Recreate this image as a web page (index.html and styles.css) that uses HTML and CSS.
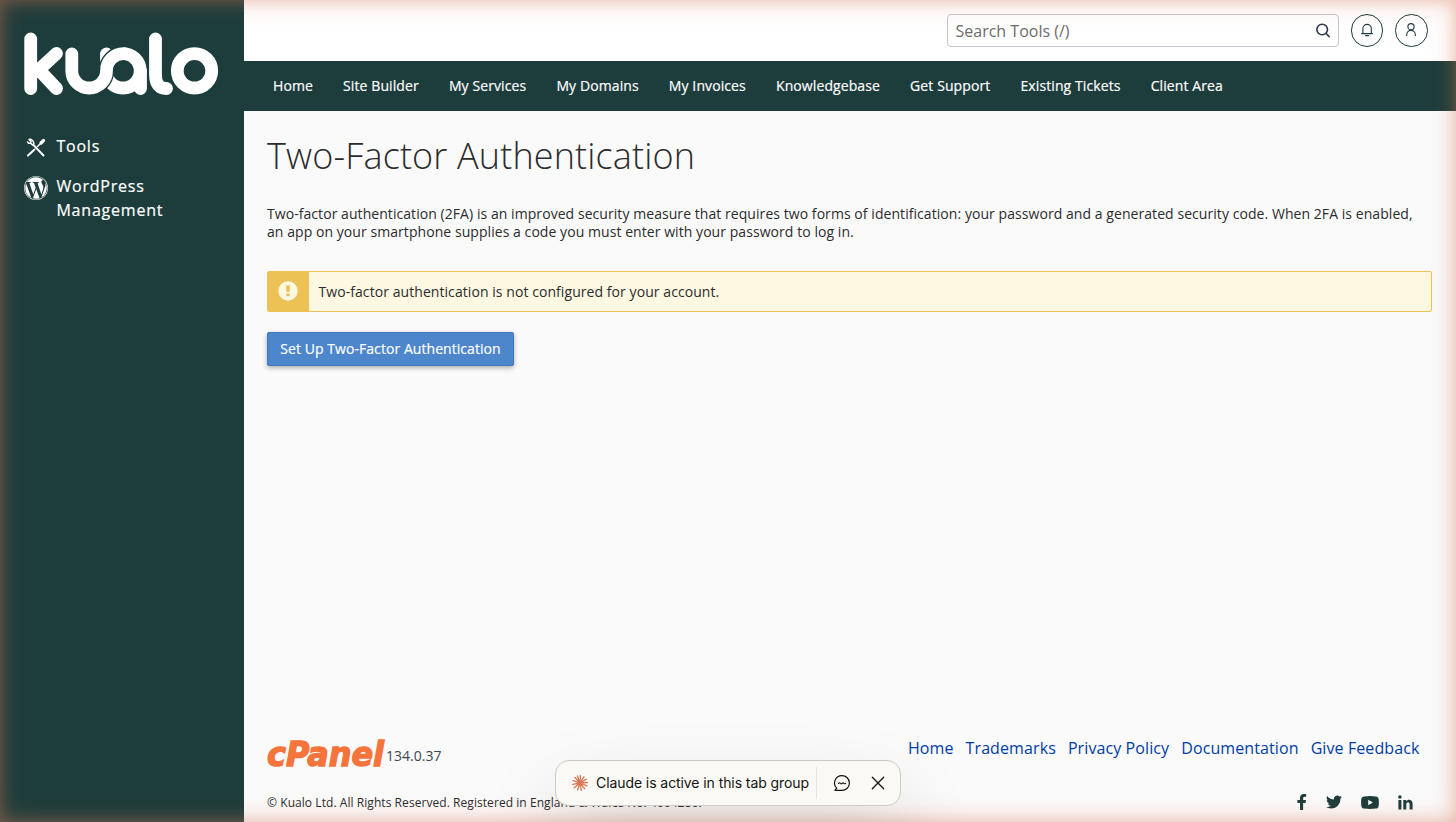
FILE: index.html
```html
<!DOCTYPE html>
<html lang="en">
<head>
<meta charset="utf-8">
<title>Two-Factor Authentication</title>
<link rel="stylesheet" href="styles.css">
</head>
<body>
<div class="app">
  <aside class="sidebar">
    <svg class="brand" width="196" height="66" viewBox="23 31 196 66" role="img" aria-label="kualo">
      <g class="brand-strokes">
        <path d="M30.700 39v49.500M56.500 53.500 37 71.500M41 72l15.500 16.500M155.500 39v35.500q0 14 11 14M140.500 71v17.500"/>
        <circle cx="123" cy="70.800" r="17.200"/>
        <circle cx="194.500" cy="70.800" r="17.200"/>
        <path d="M106.500 54v6"/>
        <path class="brand-gap" d="M101 83.500A17.500 17.500 0 0 0 106.500 71A17 17 0 0 1 124 53.600"/>
        <path d="M71.800 54V71a17.350 17 0 0 0 34.700 0A17 17 0 0 1 124 53.600"/>
      </g>
    </svg>
    <nav class="side-nav">
      <a class="side-link">
        <svg class="side-icon" viewBox="0 0 24 24"><g fill="none" stroke="currentColor" stroke-linecap="round"><path d="M9.500 9 19.500 19.500" stroke-width="1.900"/><path d="M4 19.500 10.500 13.500" stroke-width="2"/><path d="M13.500 10.500 18 6" stroke-width="1.400"/><path d="M17 7 19.500 4.500" stroke-width="3.200"/><path d="M5 3.500 7 5.500 6.500 7 4.700 7.300 3.500 6M6.500 7Q9 10 9.500 8.500 10.500 6 8 4 7 3 5.500 3.300" stroke-width="1.500"/></g></svg>
        <span>Tools</span>
      </a>
      <a class="side-link">
        <svg class="side-icon" viewBox="0 0 24 24" fill="currentColor"><path d="M21.469 6.825c.84 1.537 1.318 3.300 1.318 5.175 0 3.979-2.156 7.456-5.363 9.325l3.295-9.527c.615-1.540.820-2.771.820-3.864 0-.405-.026-.780-.070-1.110m-7.981.105c.647-.030 1.232-.105 1.232-.105.582-.075.514-.930-.067-.899 0 0-1.755.135-2.880.135-1.064 0-2.850-.150-2.850-.150-.585-.030-.661.855-.075.885 0 0 .540.061 1.125.090l1.680 4.605-2.370 7.080L5.354 6.900c.649-.030 1.234-.100 1.234-.100.585-.075.516-.930-.065-.896 0 0-1.746.138-2.874.138-.200 0-.438-.008-.690-.015C4.911 3.150 8.235 1.215 12 1.215c2.809 0 5.365 1.072 7.286 2.833-.046-.003-.091-.009-.141-.009-1.060 0-1.812.923-1.812 1.914 0 .890.513 1.643 1.060 2.531.411.720.890 1.643.890 2.977 0 .915-.354 1.994-.821 3.479l-1.075 3.585zM12 22.784c-1.059 0-2.081-.153-3.048-.437l3.237-9.406 3.315 9.087c.024.053.050.101.078.149-1.120.393-2.325.609-3.582.609M1.211 12c0-1.564.336-3.050.935-4.390L7.290 21.709A10.786 10.786 0 0 1 1.211 12M12 0a12 12 0 1 0 0 24 12 12 0 0 0 0-24m0 23.400a11.400 11.400 0 1 1 0-22.800 11.400 11.400 0 0 1 0 22.800"/></svg>
        <span>WordPress Management</span>
      </a>
    </nav>
  </aside>
  <div class="page">
    <header class="topbar">
      <div class="search">
        <span>Search Tools (/)</span>
        <svg width="16" height="16" viewBox="0 0 16 16" fill="none" stroke="#293a4a" stroke-width="1.600" stroke-linecap="round"><circle cx="7.200" cy="6.500" r="5.300"/><path d="m11.200 10.500 3 3.200"/></svg>
      </div>
      <a class="round-button" aria-label="Notifications"><svg width="16" height="16" viewBox="0 0 16 16" fill="none" stroke="currentColor" stroke-width="1.100"><path d="M2.200 11.600h11.600M3.900 11.600V6.600a4.200 4.200 0 0 1 8.400 0v5M6.200 13.600h3.700"/></svg></a>
      <a class="round-button" aria-label="Account"><svg width="16" height="16" viewBox="0 0 16 16" fill="none" stroke="currentColor" stroke-width="1.100"><circle cx="8" cy="4.700" r="3.100"/><path d="M3.700 13.900v-1.200a4.300 4.300 0 0 1 8.600 0v1.200"/></svg></a>
    </header>
    <nav class="navbar"><a>Home</a><a>Site Builder</a><a>My Services</a><a>My Domains</a><a>My Invoices</a><a>Knowledgebase</a><a>Get Support</a><a>Existing Tickets</a><a>Client Area</a></nav>
    <main class="content">
      <h1>Two-Factor Authentication</h1>
      <p class="intro">Two-factor authentication (2FA) is an improved security measure that requires two forms of identification: your password and a generated security code. When 2FA is enabled, an app on your smartphone supplies a code you must enter with your password to log in.</p>
      <div class="alert">
        <div class="alert-icon"><svg width="20" height="20" viewBox="0 0 20 20"><circle cx="10" cy="10" r="9.700" fill="#fdf8e1"/><path d="M8 4.500h4l-.4 6.500H8.400zM8.300 12.500h3.400v2.700H8.300z" fill="#ecc255"/></svg></div>
        <div class="alert-text">Two-factor authentication is not configured for your account.</div>
      </div>
      <button class="primary">Set Up Two-Factor Authentication</button>
    </main>
    <footer class="footer">
      <div class="footer-row">
        <div class="version">
          <svg class="cpanel-logo" width="119" height="32" viewBox="0 0 119 32" role="img" aria-label="cPanel"><text class="cpanel" x="0" y="26" textLength="117" lengthAdjust="spacingAndGlyphs">cPanel</text></svg>
          <span>134.0.37</span>
        </div>
        <nav class="footer-links"><a>Home</a><a>Trademarks</a><a>Privacy Policy</a><a>Documentation</a><a>Give Feedback</a></nav>
      </div>
      <div class="footer-row legal">
        <span>© Kualo Ltd. All Rights Reserved. Registered in England &amp; Wales No. 4664286.</span>
        <div class="social">
          <svg width="10" height="16" viewBox="0 0 10 16"><path d="M3 16V9H.4V6H3V4C3 1.400 4.500 0 6.900 0 8 0 9.200.200 9.200.200v2.600H7.900C6.600 2.800 6.100 3.600 6.100 4.400V6H9l-.5 3H6.100v7z"/></svg>
          <svg width="16" height="16" viewBox="0 0 24 24"><path d="M23.950 4.570a10 10 0 0 1-2.820.770 4.960 4.960 0 0 0 2.160-2.720c-.950.550-2 .950-3.120 1.180a4.920 4.920 0 0 0-8.380 4.480A13.930 13.930 0 0 1 1.640 3.160a4.820 4.820 0 0 0-.660 2.480c0 1.710.870 3.210 2.190 4.100a4.900 4.900 0 0 1-2.230-.620v.060a4.920 4.920 0 0 0 3.950 4.830 5 5 0 0 1-2.210.080 4.940 4.940 0 0 0 4.600 3.420A9.870 9.870 0 0 1 0 19.540a13.990 13.990 0 0 0 7.550 2.210c9.050 0 14-7.500 14-13.990 0-.210 0-.420-.020-.630a9.900 9.900 0 0 0 2.420-2.560z"/></svg>
          <svg width="18" height="13" viewBox="0 0 18 13"><path fill-rule="evenodd" d="M3 .400Q9-.300 15 .400C17.200.700 17.800 1.600 17.900 6.500 17.800 11.400 17.200 12.300 15 12.600Q9 13.300 3 12.600C.8 12.300.2 11.400.1 6.500.2 1.600.8.700 3 .400zM7.200 3.800v5.400l4.700-2.700z"/></svg>
          <svg width="15" height="15" viewBox="0 0 15 15"><path d="M.4 4.900h3V14.500h-3zM5.300 4.900h2.900v1.300C9.700 3.700 14.600 4 14.600 8.700v5.800h-3V9.300c0-3-3.300-2.700-3.300 0v5.200h-3z"/><circle cx="1.900" cy="2" r="1.800"/></svg>
        </div>
      </div>
    </footer>
  </div>
</div>
<div class="glow"></div>
<div class="status-pill">
  <svg class="burst" width="16" height="16" viewBox="-8 -8 16 16" stroke="#d97757" stroke-width="1.300" stroke-linecap="round"><path d="M0 0 .4-7.400M0 0 4-6.300M0 0 6.400-3.900M0 0 7.500-.5M0 0 7 2.800M0 0 4.800 5.900M0 0 1.300 7.300M0 0-2.400 7M0 0-5.800 4.800M0 0-7.400 1.300M0 0-7-2.300M0 0-5-5.500M0 0-2.600-7"/></svg>
  <span class="status-text">Claude is active in this tab group</span>
  <span class="divider"></span>
  <svg class="chat" width="18" height="18" viewBox="0 0 18 18" fill="none" stroke="#141413" stroke-width="1.200" stroke-linecap="round" stroke-linejoin="round"><path d="M9 1.600a7.400 7.400 0 1 1 0 14.800H2l1.700-2.200A7.400 7.400 0 0 1 9 1.600zM5.500 9.400q1-1.300 2 0 .9.900 1.700 0 .9-1 1.700 0 .8.700 1.600 0"/></svg>
  <svg class="close" width="14" height="14" viewBox="0 0 14 14" stroke="#141413" stroke-width="1.300" stroke-linecap="round"><path d="m1.300 1.300 11.400 11.400M12.700 1.300 1.300 12.700"/></svg>
</div>
</body>
</html>
```

FILE: styles.css
```css
* { box-sizing: border-box; }
body { margin: 0; font-family: "Open Sans", sans-serif; font-size: 14px; color: #2c2c2c; overflow: hidden; }
svg { display: block; flex: none; }
.app { display: flex; height: 822px; background: #fafafa; }
.sidebar { width: 244px; flex: none; background: #1d3d3c; padding: 31px 23px; color: #fff; }
.brand-strokes { fill: none; stroke: #fff; stroke-width: 12.8; stroke-linecap: round; stroke-linejoin: round; }
.brand-strokes .brand-gap { stroke: #1d3d3c; stroke-width: 15.5; stroke-linecap: butt; }
.side-nav { display: flex; flex-direction: column; gap: 16px; margin-top: 37px; }
.side-link { display: flex; align-items: flex-start; gap: 8.4px; padding-left: 1px; font-size: 16px; line-height: 24px; letter-spacing: .8px; -webkit-text-stroke: .2px currentColor; }
.side-link span { width: 140px; }
.side-icon { width: 24px; height: 24px; margin-top: 2px; margin-bottom: -2px; }
.page { flex: 1; min-width: 0; display: flex; flex-direction: column; }
.topbar { height: 61px; background: #fff; display: flex; justify-content: flex-end; align-items: flex-start; gap: 12px; padding: 14px 28.5px 0 0; color: #1d3d3c; }
.search { width: 392px; height: 33px; border: 1px solid #c5c5cd; border-radius: 4px; background: #fff; display: flex; align-items: center; justify-content: space-between; padding: 0 7px 0 8px; font-size: 16px; color: #6c6c6c; }
.round-button { width: 32.5px; height: 32.5px; border: 1px solid #1d3d3c; border-radius: 50%; display: flex; align-items: center; justify-content: center; }
.navbar { height: 50px; background: #1d3d3c; color: #fff; display: flex; align-items: center; gap: 30.1px; padding: 0 0 2px 29px; letter-spacing: .1px; -webkit-text-stroke: .18px currentColor; }
.content { padding: 21px 24px 0 23px; flex: 1; }
h1 { margin: 0; font-size: 36px; line-height: 48px; font-weight: 300; letter-spacing: .15px; }
.intro { margin: 25px 0 30px; line-height: 18px; letter-spacing: .06px; }
.alert { height: 41px; border: 1px solid #ecc255; border-radius: 2px; background: #fdf8e1; display: flex; }
.alert-icon { width: 41px; background: #ecc255; padding: 9px 0 0 10px; }
.alert-text { padding-left: 9.5px; line-height: 39px; letter-spacing: .066px; }
.primary { display: block; margin-top: 20px; width: 247px; height: 34px; padding: 0 0 1px; border: 1px solid #3f77bd; border-radius: 2px; background: #4d86cb; color: #fff; font: 400 14px "Open Sans", sans-serif; letter-spacing: .06px; -webkit-text-stroke: .18px currentColor; box-shadow: 0 2px 5px rgba(0,0,0,.3); }
.footer { padding: 0 24px 8px 23px; }
.footer-row { display: flex; justify-content: space-between; }
.version { display: flex; height: 32px; line-height: 32px; color: #3c4650; }
.cpanel-logo { overflow: visible; }
.cpanel { font: italic 700 34px "DejaVu Sans", sans-serif; fill: #f4743b; stroke: #f4743b; stroke-width: 1.4; }
.footer-links { display: flex; gap: 12px; padding-right: 12.5px; margin-top: -1px; font-size: 16px; line-height: 18px; letter-spacing: .1px; color: #003da6; }
.legal { margin-top: 20px; font-size: 12px; line-height: 22px; letter-spacing: .06px; }
.social { display: flex; align-items: center; gap: 19px; padding-right: 19px; margin-top: -2px; fill: #1d3d3c; }
.glow { position: absolute; inset: 0; pointer-events: none; box-shadow: inset 0 0 15px rgba(217,119,87,.35), inset 0 0 25px rgba(217,119,87,.2), inset 0 0 35px rgba(217,119,87,.1); }
.status-pill { position: absolute; left: 555px; top: 760px; width: 346px; height: 46px; border: 1px solid #cccbc4; border-radius: 14px; background: #faf9f5; display: flex; align-items: center; padding-left: 16px; box-shadow: 0 40px 80px rgba(0,0,0,.15); color: #141413; font: 14px Inter, sans-serif; }
.status-text { margin-left: 8px; width: 213px; white-space: nowrap; letter-spacing: -.08px; padding-bottom: 1px; }
.divider { width: 1px; height: 32px; margin-left: 7px; background: #e6e4dc; }
.chat { margin-left: 16px; }
.close { margin-left: 20px; }
```
